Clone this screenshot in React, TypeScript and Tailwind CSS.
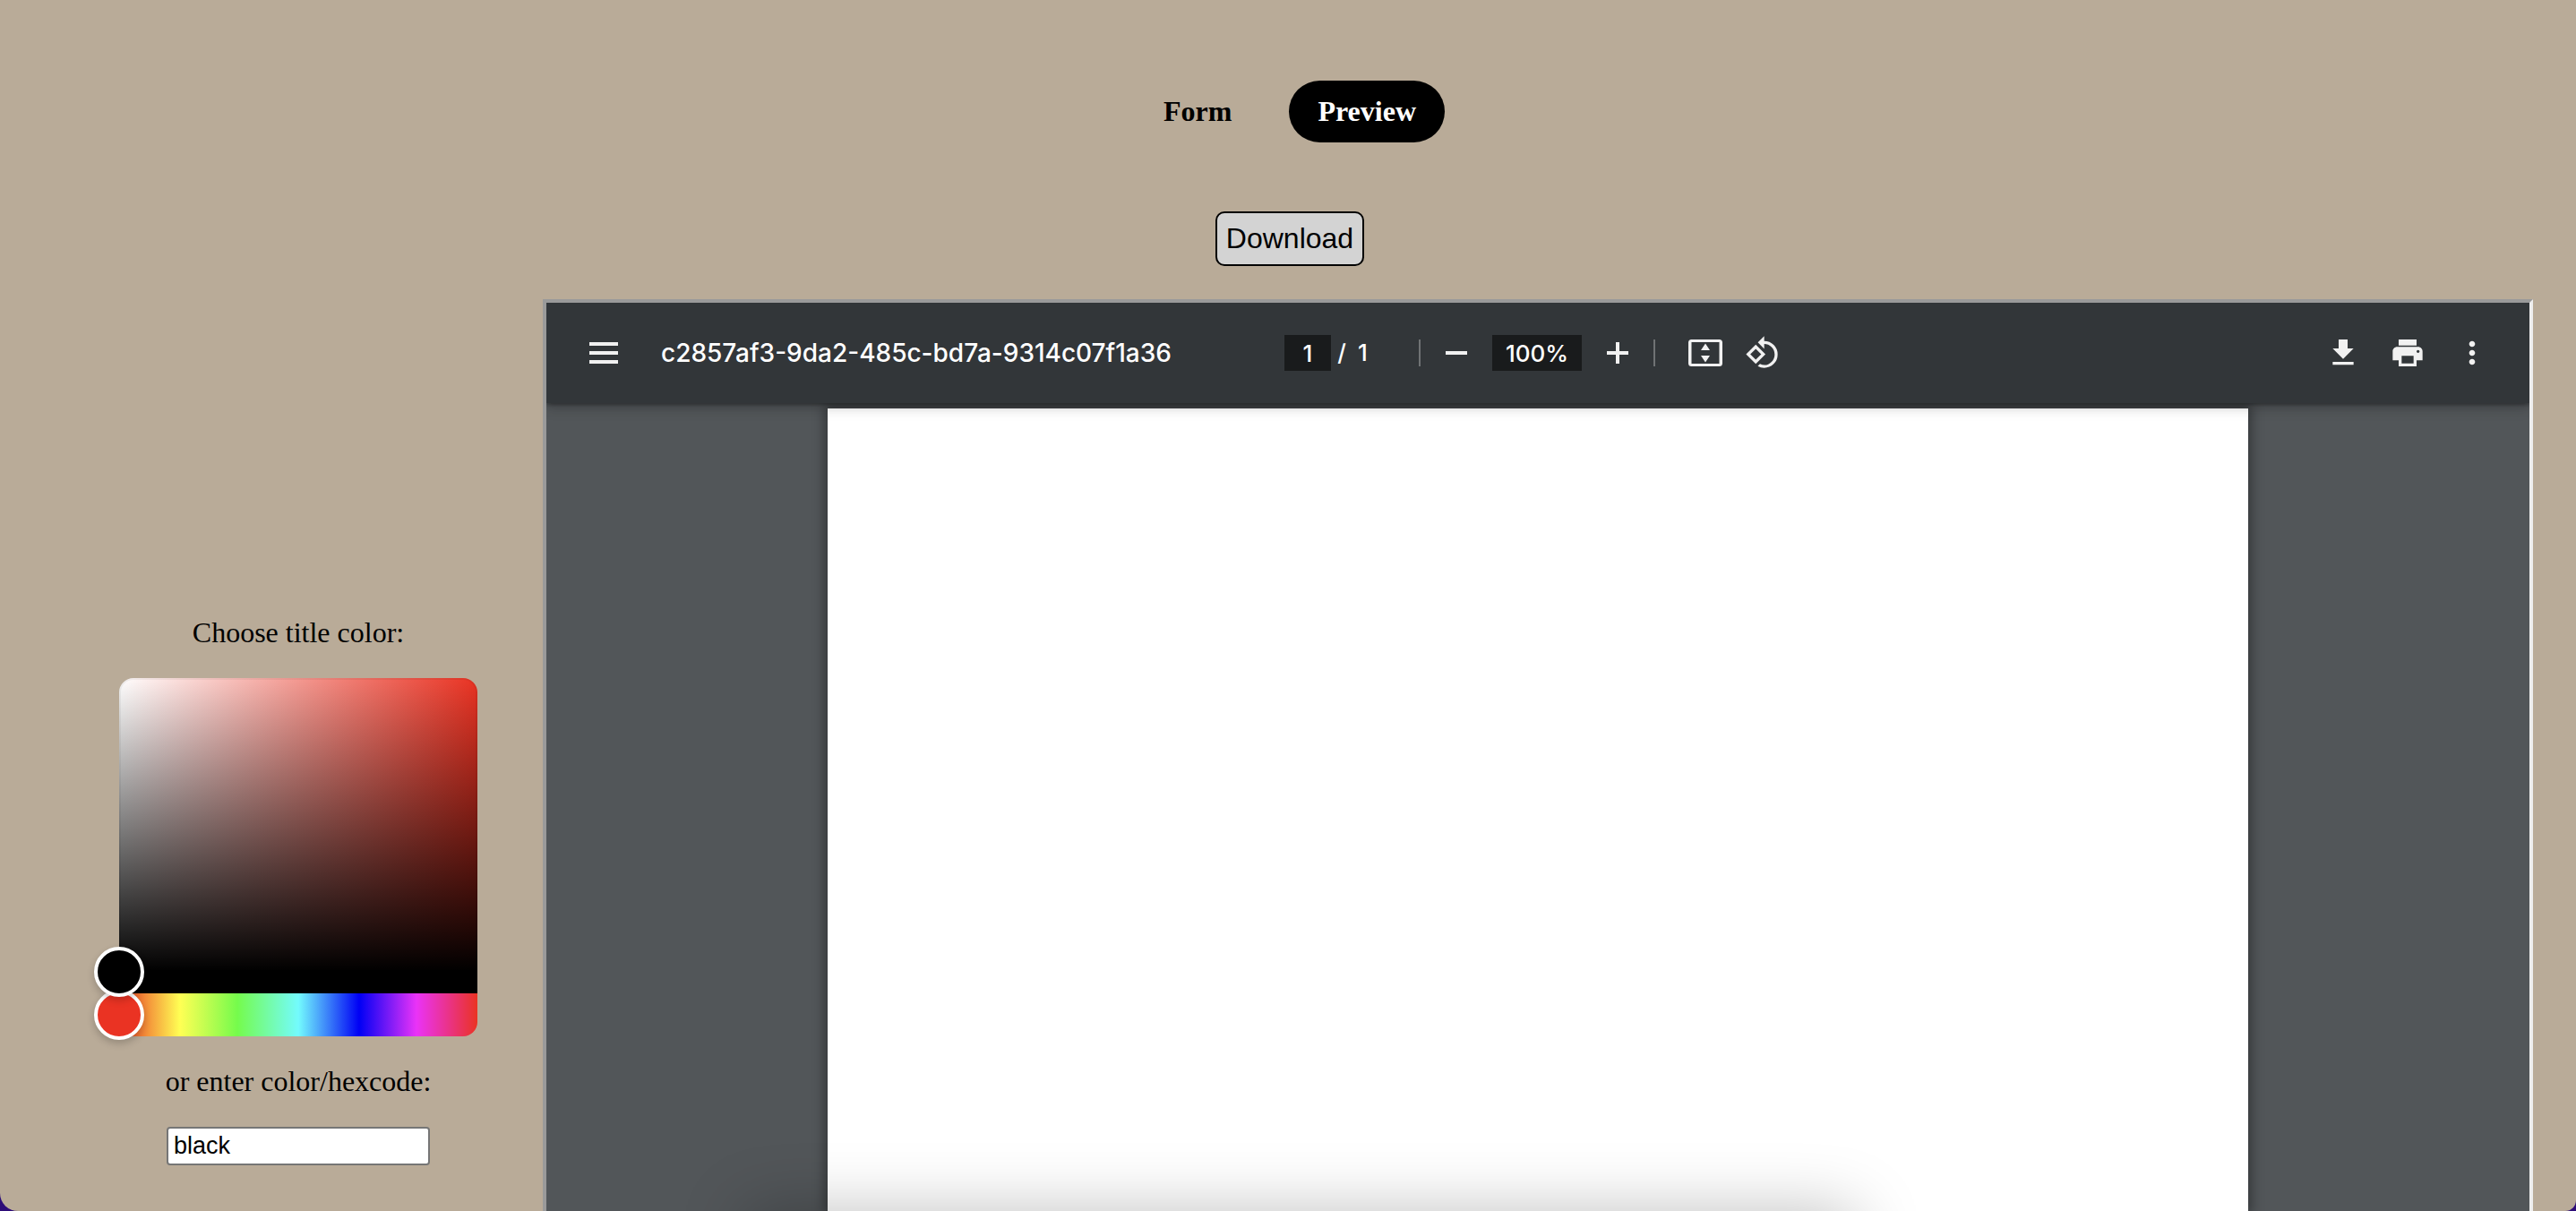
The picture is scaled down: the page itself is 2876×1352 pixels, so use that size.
import React, { useState } from "react";

function ToolButton({ label, children }: { label: string; children: React.ReactNode }) {
  return (
    <button type="button" aria-label={label} className="flex size-16 shrink-0 items-center justify-center rounded-full text-[#f1f1f1]">
      {children}
    </button>
  );
}

function Icon({ d }: { d: string }) {
  return (
    <svg viewBox="0 0 24 24" className="size-10" fill="currentColor" aria-hidden="true">
      <path d={d} />
    </svg>
  );
}

function Navigation() {
  return (
    <nav className="flex justify-center gap-8 pt-[90px] pl-1 text-[32px] leading-[37px] font-bold">
      <button type="button" className="rounded-full px-8 py-4">Form</button>
      <button type="button" className="rounded-full bg-black px-8 py-4 text-white">Preview</button>
    </nav>
  );
}

function ColorPicker() {
  return (
    <div className="relative flex h-[400px] w-full flex-col">
      <div className="flex-1 rounded-t-2xl border-b-24 border-black bg-[linear-gradient(to_top,#000,transparent),linear-gradient(to_right,#fff,#ea3323)] bg-origin-padding shadow-[inset_0_0_0_2px_rgba(0,0,0,0.05)]" />
      <div className="h-12 rounded-b-2xl bg-[linear-gradient(to_right,#ea3323_0%,#ffff54_17%,#75fb4c_33%,#73fbfd_50%,#0000f5_67%,#ea33f7_83%,#ea3323_100%)]" />
      <div className="absolute bottom-6 left-0 size-14 -translate-x-1/2 translate-y-1/2 rounded-full border-4 border-white bg-[#ea3323] shadow-[0_4px_8px_rgba(0,0,0,0.2)]" />
      <div className="absolute bottom-[72px] left-0 size-14 -translate-x-1/2 translate-y-1/2 rounded-full border-4 border-white bg-black shadow-[0_4px_8px_rgba(0,0,0,0.2)]" />
    </div>
  );
}

function TitleColorPanel() {
  const [color, setColor] = useState("black");
  return (
    <aside className="flex w-[606px] shrink-0 flex-col items-center gap-8 pt-[354px] pr-[73px] pl-[133px] text-[32px] leading-[37px]">
      <p>Choose title color:</p>
      <ColorPicker />
      <label htmlFor="title-color">or enter color/hexcode:</label>
      <input
        id="title-color"
        type="text"
        value={color}
        onChange={(e) => setColor(e.target.value)}
        className="h-[43px] w-[294px] rounded-[4px] border-2 border-[#767676] bg-white px-1.5 font-['Liberation_Sans',Arial,sans-serif] text-[27px] leading-[31px] text-black"
      />
    </aside>
  );
}

function ViewerToolbar() {
  return (
    <header className="relative z-10 grid h-28 grid-cols-[1fr_auto_1fr] items-center bg-[#323639] px-8 text-[26px] leading-8 font-medium text-white shadow-[0_-4px_16px_rgba(0,0,0,0.09),0_8px_16px_rgba(0,0,0,0.06),0_2px_4px_rgba(0,0,0,0.3),0_4px_12px_rgba(0,0,0,0.15)]">
      <div className="flex items-center gap-8">
        <ToolButton label="Menu">
          <svg viewBox="0 0 32 24" className="h-6 w-8" fill="currentColor" aria-hidden="true">
            <path d="M0 0h32v4H0zM0 10h32v4H0zM0 20h32v4H0z" />
          </svg>
        </ToolButton>
        <span className="text-[28px] whitespace-nowrap">c2857af3-9da2-485c-bd7a-9314c07f1a36</span>
      </div>
      <div className="flex items-center">
        <input aria-label="Page number" defaultValue="1" className="h-10 w-[52px] bg-[#191b1c] text-center" />
        <span className="w-6 text-center">/</span>
        <span className="w-[74px] pl-1.5">1</span>
        <span className="h-[30px] w-0.5 bg-white/30" />
        <span className="ml-2 flex items-center gap-2">
          <ToolButton label="Zoom out">
            <svg viewBox="0 0 24 24" className="size-6" fill="currentColor" aria-hidden="true">
              <path d="M0 10h24v4H0z" />
            </svg>
          </ToolButton>
          <input aria-label="Zoom level" defaultValue="100%" className="h-10 w-[100px] bg-[#191b1c] text-center" />
          <ToolButton label="Zoom in">
            <svg viewBox="0 0 24 24" className="size-6" fill="currentColor" aria-hidden="true">
              <path d="M10 0h4v10h10v4H14v10h-4V14H0v-4h10z" />
            </svg>
          </ToolButton>
        </span>
        <span className="mr-6 ml-2 h-[30px] w-0.5 bg-white/30" />
        <ToolButton label="Fit to page">
          <svg viewBox="0 0 38 30" className="h-[30px] w-[38px]" fill="currentColor" aria-hidden="true">
            <path fillRule="evenodd" d="M3.500 0h31A3.500 3.500 0 0 1 38 3.500v23a3.500 3.500 0 0 1-3.500 3.500h-31A3.500 3.500 0 0 1 0 26.500v-23A3.500 3.500 0 0 1 3.500 0zM3.500 3v24h31V3z" />
            <path d="M19 4.500l5 7.500H14zM19 25.500l5-7.500H14z" />
          </svg>
        </ToolButton>
        <ToolButton label="Rotate counterclockwise">
          <Icon d="M7.340 6.410L.86 12.900l6.490 6.480 6.490-6.480-6.500-6.490zM3.690 12.900l3.660-3.660L11 12.900l-3.660 3.660-3.650-3.660zm15.670-6.260A8.950 8.950 0 0 0 13 4V.76L8.760 5 13 9.240V6c1.790 0 3.580.68 4.950 2.050a7.007 7.007 0 0 1 0 9.900 6.973 6.973 0 0 1-7.790 1.440l-1.490 1.490C10.020 21.620 11.510 22 13 22c2.300 0 4.610-.88 6.360-2.640a8.980 8.980 0 0 0 0-12.720z" />
        </ToolButton>
      </div>
      <div className="flex justify-end gap-2">
        <ToolButton label="Download file">
          <Icon d="M19 9h-4V3H9v6H5l7 7 7-7zM5 18v2h14v-2H5z" />
        </ToolButton>
        <ToolButton label="Print">
          <Icon d="M19 8H5c-1.660 0-3 1.340-3 3v6h4v4h12v-4h4v-6c0-1.660-1.340-3-3-3zm-3 11H8v-5h8v5zm3-7c-.55 0-1-.45-1-1s.45-1 1-1 1 .45 1 1-.45 1-1 1zm-1-9H6v4h12V3z" />
        </ToolButton>
        <ToolButton label="More actions">
          <Icon d="M12 8c1.100 0 2-.9 2-2s-.9-2-2-2-2 .9-2 2 .9 2 2 2zm0 2c-1.100 0-2 .9-2 2s.9 2 2 2 2-.9 2-2-.9-2-2-2zm0 6c-1.100 0-2 .9-2 2s.9 2 2 2 2-.9 2-2-.9-2-2-2z" />
        </ToolButton>
      </div>
    </header>
  );
}

function DocumentViewer() {
  return (
    <section className="flex min-w-0 flex-1 flex-col overflow-hidden border-4 border-b-0 border-t-[#9a9a9a] border-r-[#eeeeee] border-l-[#9a9a9a] bg-[#525659] font-[Inter,sans-serif]">
      <ViewerToolbar />
      <div className="mx-auto mt-1.5 w-[1586px] max-w-full flex-1 bg-white shadow-[0_0_12px_4px_rgba(0,0,0,0.35)]" />
    </section>
  );
}

export default function App() {
  return (
    <div className="bg-[#2d0c78]">
      <main className="relative flex min-h-screen flex-col overflow-hidden rounded-br-xl rounded-bl-[20px] bg-[#b9ab98] font-['Liberation_Serif','Times_New_Roman',serif] text-black">
        <Navigation />
        <button
          type="button"
          className="mt-[77px] ml-1 self-center rounded-[10px] border-2 border-black bg-[#d3d3d3] px-2.5 py-2.5 font-['Liberation_Sans',Arial,sans-serif] text-[32px] leading-[37px]"
        >
          Download
        </button>
        <div className="mt-[37px] flex flex-1 pr-12">
          <TitleColorPanel />
          <DocumentViewer />
        </div>
        <div className="pointer-events-none absolute top-full right-[28%] left-[29%] z-20 h-20 shadow-[0_0_72px_rgba(0,0,0,0.25)]" />
      </main>
    </div>
  );
}
